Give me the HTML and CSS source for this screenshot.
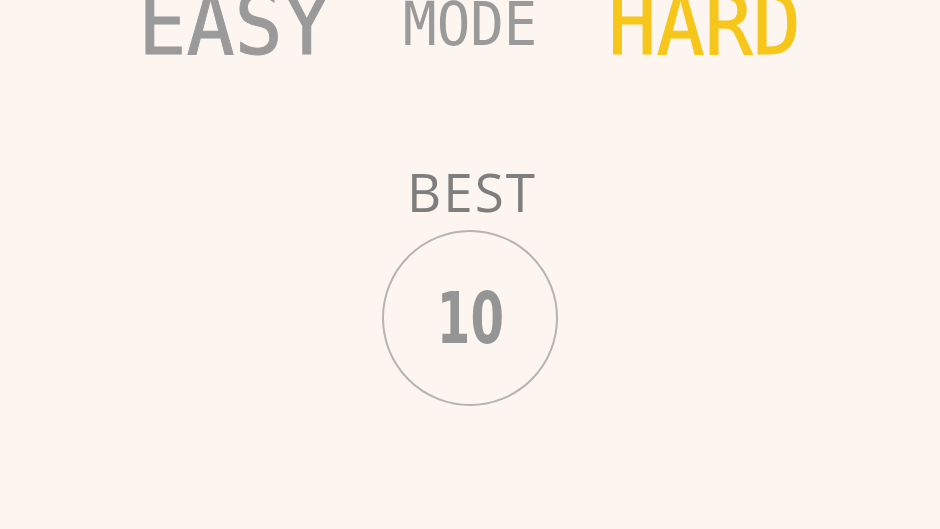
FILE: index.html
```html
<!DOCTYPE html>
<html lang="en">
<head>
    <meta charset="UTF-8">
    <meta name="viewport" content="width=device-width, initial-scale=1.0">
    <title>Mode Select</title>
    <link rel="stylesheet" href="styles.css">
</head>
<body>
    <!-- mode switch -->
    <div class="modes">
        <span class="mode-opt easy">EASY</span>
        <span class="mode-label">MODE</span>
        <span class="mode-opt hard active">HARD</span>
    </div>

    <!-- best score -->
    <div class="best">
        <div class="best-title">BEST</div>
        <div class="best-ring">
            <span class="best-score">10</span>
        </div>
    </div>
</body>
</html>
```

FILE: styles.css
```css
:root {
    --bg: #fdf5ef;
    --grey: #9a9a9a;
    --grey-dark: #7e7e7e;
    --yellow: #f6c61a;
}

body {
    margin: 0;
    background: var(--bg);
    height: 100vh;
    overflow: hidden;
    font-family: 'DejaVu Sans Mono', monospace;
}

/* 模式切換 */
.modes {
    display: grid;
    grid-template-columns: repeat(3, 235px);
    justify-content: center;
    justify-items: center;
    align-items: center;
    margin-top: -19px;
}

.mode-opt,
.mode-label {
    display: inline-block;
    line-height: 1;
    color: var(--grey);
    transform: scaleX(0.93);
}

.mode-opt {
    font-size: 86px;
    -webkit-text-stroke: 1px currentColor;
}

.mode-opt.active {
    color: var(--yellow);
}

.mode-label {
    font-size: 60px;
}

/* 最高分 */
.best {
    display: flex;
    flex-direction: column;
    align-items: center;
    margin-top: 98px;
}

.best-title {
    font-family: 'Open Sans', sans-serif;
    font-size: 53px;
    line-height: 1;
    letter-spacing: 2px;
    padding-left: 4px;
    color: var(--grey-dark);
}

.best-ring {
    width: 172px;
    height: 172px;
    margin-top: 12px;
    border: 2px solid #b4b4b4;
    border-radius: 50%;
    display: flex;
    align-items: center;
    justify-content: center;
}

.best-score {
    display: inline-block;
    font-family: 'DejaVu Sans', sans-serif;
    font-size: 71px;
    line-height: 1;
    font-weight: bold;
    color: #959595;
    transform: scaleX(0.68);
}
```
